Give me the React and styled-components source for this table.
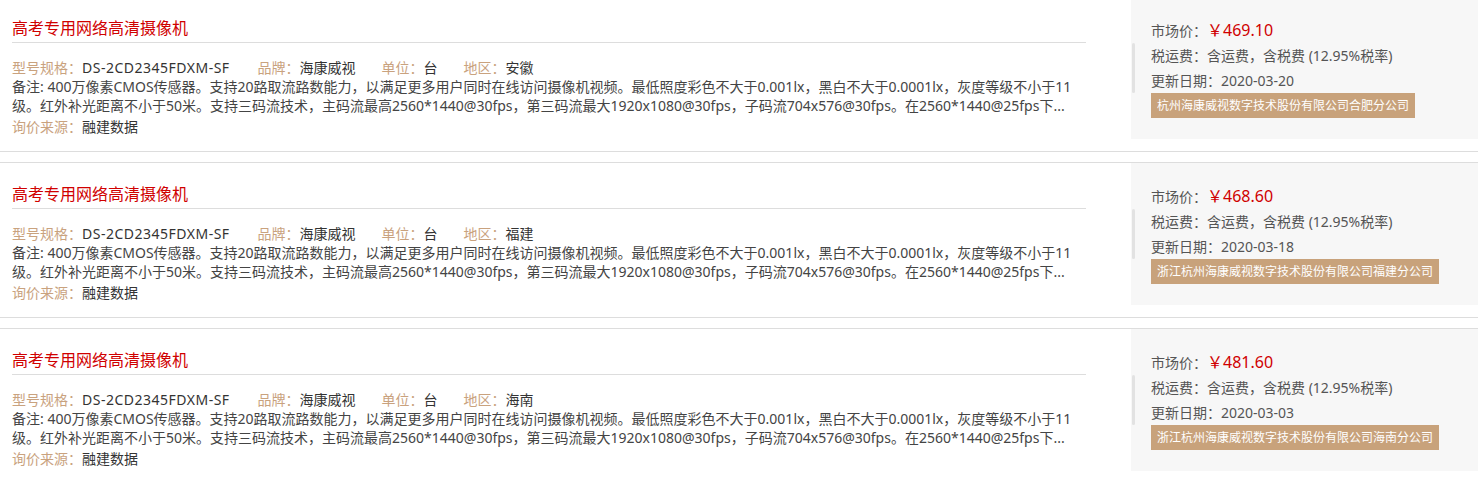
import React from 'react';
import styled, { createGlobalStyle } from 'styled-components';

const GlobalStyle = createGlobalStyle`
  body {
    margin: 0;
    background: #fff;
    font-family: "Noto Sans", "Noto Sans CJK SC", sans-serif;
    color: #333;
  }
`;

const List = styled.div`
  margin-top: -4px;
`;

const Item = styled.div`
  display: flex;
  height: 154px;
  border-top: 1px solid #ddd;
  border-bottom: 1px solid #ddd;
  margin-bottom: 10px;
`;

const Main = styled.div`
  width: 1074px;
  margin-left: 12px;
  padding-top: 19px;
`;

const Title = styled.h3`
  margin: 0;
  padding-bottom: 2px;
  font-size: 16px;
  line-height: 24px;
  font-weight: normal;
  color: #d00000;
  border-bottom: 1px solid #ddd;
`;

const Specs = styled.div`
  display: flex;
  margin-top: 15px;
  font-size: 14px;
  line-height: 19px;
`;

const Spec = styled.span`
  margin-right: ${(p) => (p.wide ? '28px' : '26px')};
  color: #333;
  letter-spacing: ${(p) => (p.wide ? '0.5px' : '0')};
`;

const Label = styled.span`
  color: #c9a27e;
  letter-spacing: 0;
`;

const Desc = styled.p`
  margin: 0;
  font-size: 14px;
  line-height: 19px;
  color: #444;
  display: -webkit-box;
  -webkit-line-clamp: 2;
  -webkit-box-orient: vertical;
  overflow: hidden;
`;

const Source = styled.div`
  margin-top: 2px;
  font-size: 14px;
  line-height: 19px;
`;

const Side = styled.div`
  position: relative;
  margin-left: auto;
  width: 327px;
  height: 121px;
  padding: 21px 0 0 20px;
  background: #f7f7f7;

  &::before {
    content: '';
    position: absolute;
    left: 1px;
    top: 46px;
    width: 3px;
    height: 50px;
    border-radius: 2px;
    background: #e2e2e2;
  }
`;

const Row = styled.div`
  font-size: 14px;
  line-height: 25px;
  color: #555;
`;

const Price = styled.span`
  font-size: 16px;
  color: #d00000;
`;

const Badge = styled.span`
  display: inline-block;
  padding: 0 6px;
  font-size: 12px;
  line-height: 25px;
  color: #fff;
  background: #c8a27b;
`;

const desc =
  '备注: 400万像素CMOS传感器。支持20路取流路数能力，以满足更多用户同时在线访问摄像机视频。最低照度彩色不大于0.001lx，黑白不大于0.0001lx，灰度等级不小于11级。红外补光距离不小于50米。支持三码流技术，主码流最高2560*1440@30fps，第三码流最大1920x1080@30fps，子码流704x576@30fps。在2560*1440@25fps下...';

const items = [
  { region: '安徽', price: '469.10', date: '2020-03-20', company: '杭州海康威视数字技术股份有限公司合肥分公司' },
  { region: '福建', price: '468.60', date: '2020-03-18', company: '浙江杭州海康威视数字技术股份有限公司福建分公司' },
  { region: '海南', price: '481.60', date: '2020-03-03', company: '浙江杭州海康威视数字技术股份有限公司海南分公司' },
];

export default function App() {
  return (
    <>
      <GlobalStyle />
      <List>
        {items.map((it) => (
          <Item key={it.region}>
            <Main>
              <Title>高考专用网络高清摄像机</Title>
              <Specs>
                <Spec wide><Label>型号规格：</Label>DS-2CD2345FDXM-SF</Spec>
                <Spec><Label>品牌：</Label>海康威视</Spec>
                <Spec><Label>单位：</Label>台</Spec>
                <Spec><Label>地区：</Label>{it.region}</Spec>
              </Specs>
              <Desc>{desc}</Desc>
              <Source><Label>询价来源：</Label>融建数据</Source>
            </Main>
            <Side>
              <Row>市场价：<Price>￥{it.price}</Price></Row>
              <Row>税运费：含运费，含税费 (12.95%税率)</Row>
              <Row>更新日期：{it.date}</Row>
              <Badge>{it.company}</Badge>
            </Side>
          </Item>
        ))}
      </List>
    </>
  );
}
